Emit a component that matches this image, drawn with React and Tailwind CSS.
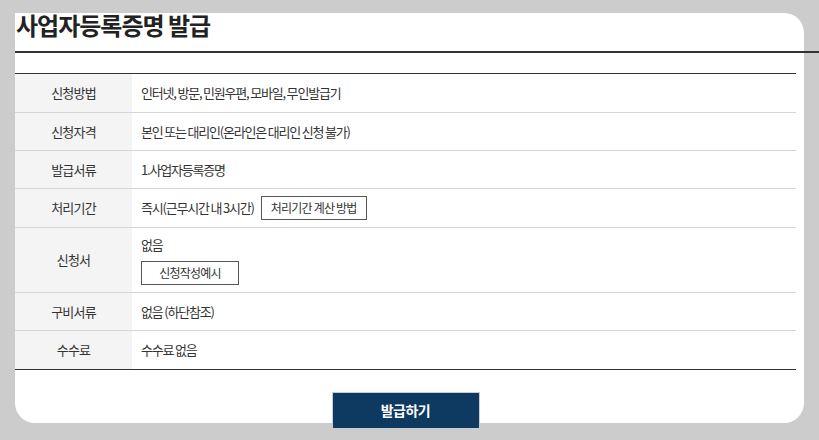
const rows = [
  { label: '신청방법', value: '인터넷, 방문, 민원우편, 모바일, 무인발급기', h: 'h-[39px]' },
  { label: '신청자격', value: '본인 또는 대리인(온라인은 대리인 신청 불가)', h: 'h-[38px]' },
  { label: '발급서류', value: '1.사업자등록증명', h: 'h-[38px]' },
  { label: '처리기간', value: '즉시(근무시간 내 3시간)', button: '처리기간 계산 방법', h: 'h-[39px]' },
  { label: '신청서', value: '없음', below: '신청작성예시', h: 'h-[65px]' },
  { label: '구비서류', value: '없음 (하단참조)', h: 'h-[38px]' },
  { label: '수수료', value: '수수료 없음', h: 'h-[39px]' },
]

const App = () => {
  return (
    <div
      className="w-[819px] h-[440px] bg-[#cccccc] overflow-hidden pt-[15px] pl-[15px]"
      style={{ fontFamily: '"Noto Sans CJK KR", "Noto Sans", sans-serif' }}
    >
      <div className="w-[789px] h-[410px] bg-white rounded-tr-[20px] rounded-b-[20px] pr-[8px]">
        <h1 className="text-[24px] font-bold text-[#222] leading-none tracking-[-1px] -mt-[2px] pl-[1px]">
          사업자등록증명 발급
        </h1>
        <div className="w-[804px] h-[2px] bg-[#333] mt-[14px]" />
        <table className="w-[781px] mt-[20px] border-collapse border-t border-b border-[#333] text-[13px] text-[#333] tracking-[-0.8px]">
          <tbody>
            {rows.map((r, i) => (
              <tr key={r.label} className={`${r.h} ${i > 0 ? 'border-t border-[#d6d6d6]' : ''}`}>
                <th className="w-[117px] bg-[#f4f4f4] font-normal text-center align-middle">{r.label}</th>
                <td className="pl-[9px] align-middle tracking-[-1.2px]">
                  {r.below ? (
                    <div className="flex flex-col items-start gap-[6px]">
                      <span>{r.value}</span>
                      <span className="w-[98px] h-[24px] border border-[#555] flex items-center justify-center text-[12px] tracking-[-0.8px]">
                        {r.below}
                      </span>
                    </div>
                  ) : (
                    <div className="flex items-center gap-[7px]">
                      <span>{r.value}</span>
                      {r.button && (
                        <span className="w-[106px] h-[24px] border border-[#555] flex items-center justify-center text-[12px] tracking-[-0.8px]">
                          {r.button}
                        </span>
                      )}
                    </div>
                  )}
                </td>
              </tr>
            ))}
          </tbody>
        </table>
        <div className="flex justify-center mt-[22px]">
          <button className="w-[148px] h-[37px] bg-[#0e3a62] border border-[#c9ced3] text-white text-[14px] font-bold tracking-[-0.5px]">
            발급하기
          </button>
        </div>
      </div>
    </div>
  )
}

export default App
